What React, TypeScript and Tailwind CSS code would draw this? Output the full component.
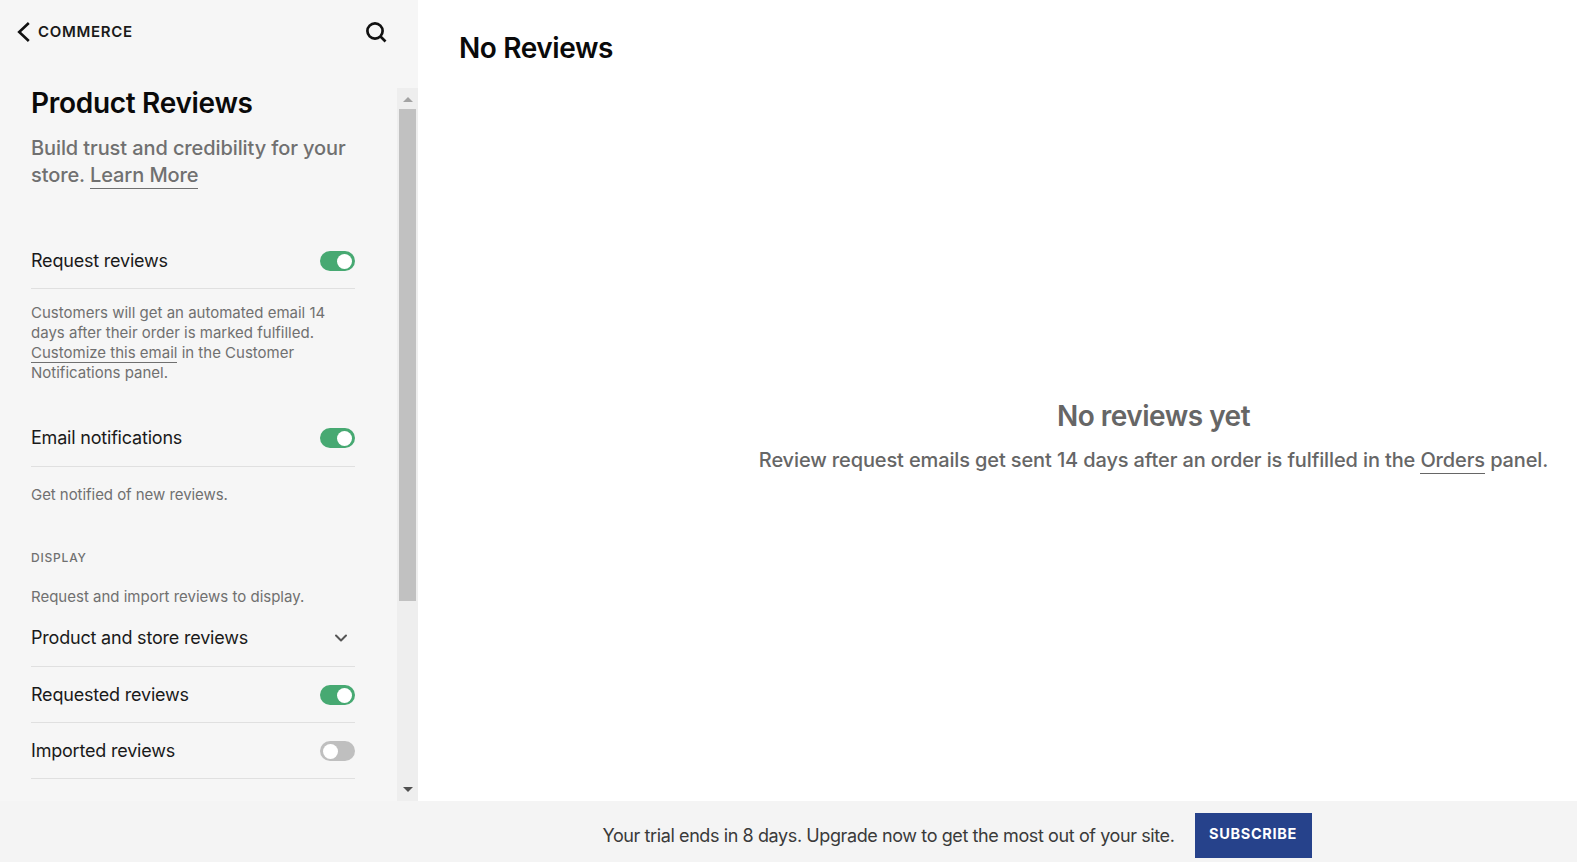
import React from 'react';
import { ChevronDown } from 'lucide-react';

const font = { fontFamily: 'Inter, "Liberation Sans", sans-serif' };

const Toggle: React.FC<{ on?: boolean }> = ({ on }) => (
    <span className={`flex h-5 w-[35px] shrink-0 items-center rounded-full px-[3px] ${on ? 'justify-end bg-[#47a972]' : 'justify-start bg-[#bfbfbf]'}`}>
        <span className="h-[15px] w-[15px] rounded-full bg-white" />
    </span>
);

const Row: React.FC<{ label: string; tall?: boolean; children: React.ReactNode }> = ({ label, tall, children }) => (
    <div className={`flex items-start justify-between border-b border-[#e0e0e0] pt-[18px] text-[18px] leading-[20px] tracking-[-0.2px] text-[#1a1a1a] ${tall ? 'h-[57px]' : 'h-14'}`}>
        <span>{label}</span>
        {children}
    </div>
);

const App: React.FC = () => {
    return (
        <div className="flex h-[862px] w-[1577px] flex-col overflow-hidden bg-white" style={font}>
            <div className="flex min-h-0 flex-1">
                <aside className="flex w-[418px] shrink-0 flex-col bg-[#f6f6f6]">
                    <div className="flex h-[88px] shrink-0 items-start justify-between pl-[17px] pr-[31px] pt-[21px]">
                        <div className="flex items-center gap-[8px]">
                            <svg width="13" height="20" viewBox="0 0 13 20" fill="none" stroke="#111" strokeWidth="2.6">
                                <path d="M11.8 1 2.2 10l9.6 9" />
                            </svg>
                            <span className="text-[15px] font-semibold tracking-[0.7px] text-[#1a1a1a]">COMMERCE</span>
                        </div>
                        <svg width="22" height="22" viewBox="0 0 22 22" fill="none" stroke="#111" strokeWidth="2.7">
                            <circle cx="10" cy="10" r="7.6" />
                            <path d="m15.5 15.5 5 5" />
                        </svg>
                    </div>
                    <div className="flex min-h-0 flex-1">
                        <div className="min-w-0 flex-1 pl-[31px] pr-[42px]">
                            <h1 className="text-[28px] font-semibold leading-[30px] tracking-[-0.3px] text-[#0a0a0a]">Product Reviews</h1>
                            <p className="mt-[17px] text-[20px] font-medium leading-[27px] tracking-[-0.1px] text-[#707070]">
                                Build trust and credibility for your store. <a className="border-b border-[#707070] pb-[1px]">Learn More</a>
                            </p>
                            <div className="mt-[44px]">
                                <Row label="Request reviews"><Toggle on /></Row>
                            </div>
                            <p className="mt-[14px] text-[15px] leading-5 text-[#707070]">
                                Customers will get an automated email 14 days after their order is marked fulfilled. <a className="border-b border-[#707070]">Customize this email</a> in the Customer Notifications panel.
                            </p>
                            <div className="mt-[27px]">
                                <Row label="Email notifications" tall><Toggle on /></Row>
                            </div>
                            <p className="mt-[18px] text-[15px] leading-5 tracking-[-0.05px] text-[#707070]">Get notified of new reviews.</p>
                            <div className="mt-[43px] text-[12px] font-medium leading-5 tracking-[0.8px] text-[#707070]">DISPLAY</div>
                            <p className="mt-[19px] text-[15px] leading-5 text-[#707070]">Request and import reviews to display.</p>
                            <div className="mt-[3px]">
                                <Row label="Product and store reviews" tall>
                                    <ChevronDown size={20} strokeWidth={2.4} className="mr-[4px] text-[#555]" />
                                </Row>
                                <Row label="Requested reviews"><Toggle on /></Row>
                                <Row label="Imported reviews"><Toggle /></Row>
                            </div>
                        </div>
                        <div className="flex h-[713px] w-[21px] shrink-0 flex-col bg-[#eeeeee]">
                            <div className="flex h-[21px] items-center justify-center pt-[2px]">
                                <span className="h-0 w-0 border-x-[5px] border-b-[5px] border-x-transparent border-b-[#a3a3a3]" />
                            </div>
                            <div className="mx-[2px] h-[492px] bg-[#c1c1c1]" />
                            <div className="flex-1" />
                            <div className="flex h-[21px] items-center justify-center pb-[2px]">
                                <span className="h-0 w-0 border-x-[5px] border-t-[5px] border-x-transparent border-t-[#505050]" />
                            </div>
                        </div>
                    </div>
                </aside>
                <main className="flex min-w-0 flex-1 flex-col px-[41px] pt-[28px]">
                    <h2 className="text-[28px] font-semibold leading-[40px] tracking-[-0.4px] text-[#0a0a0a]">No Reviews</h2>
                    <div className="flex flex-1 flex-col items-center justify-center pl-[312px] pt-[2px]">
                        <div className="text-[28px] font-semibold leading-[36px] tracking-[-0.5px] text-[#666]">No reviews yet</div>
                        <p className="mt-[13px] whitespace-nowrap text-[20px] font-medium leading-[27px] tracking-[-0.13px] text-[#666]">
                            Review request emails get sent 14 days after an order is fulfilled in the <a className="border-b border-[#666] pb-[1px]">Orders</a> panel.
                        </p>
                    </div>
                </main>
            </div>
            <footer className="flex h-[61px] shrink-0 items-start justify-center gap-5 bg-[#f4f4f4] pl-[337px] pt-3">
                <span className="mt-[11px] whitespace-nowrap text-[18px] leading-6 tracking-[-0.4px] text-[#3a3a3a]">Your trial ends in 8 days. Upgrade now to get the most out of your site.</span>
                <button className="flex h-[45px] w-[117px] items-center justify-center bg-[#26428b] pb-[3px] text-[14.5px] font-bold tracking-[0.65px] text-white">SUBSCRIBE</button>
            </footer>
        </div>
    );
};

export default App;
